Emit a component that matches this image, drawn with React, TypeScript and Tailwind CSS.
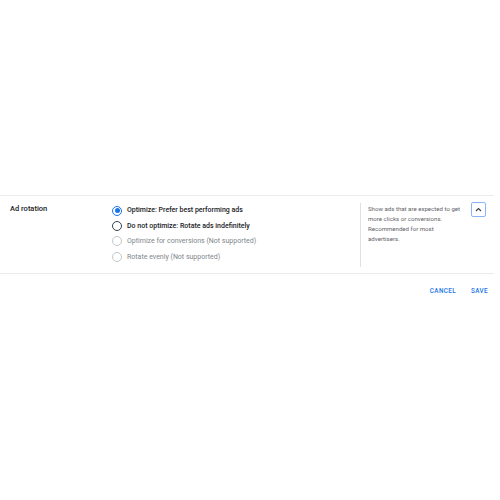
const options = [
  { label: "Optimize: Prefer best performing ads", checked: true, disabled: false },
  { label: "Do not optimize: Rotate ads indefinitely", checked: false, disabled: false },
  { label: "Optimize for conversions (Not supported)", checked: false, disabled: true },
  { label: "Rotate evenly (Not supported)", checked: false, disabled: true },
];

const Radio = ({ checked, disabled }: { checked: boolean; disabled: boolean }) => {
  if (checked) {
    return (
      <span className="w-[10px] h-[10px] rounded-full border-[1.5px] border-[#1a73e8] flex items-center justify-center">
        <span className="w-[5px] h-[5px] rounded-full bg-[#1a73e8]" />
      </span>
    );
  }
  return (
    <span
      className={
        disabled
          ? "w-[10px] h-[10px] rounded-full border border-[#c4c7c5]"
          : "w-[10px] h-[10px] rounded-full border-[1.5px] border-[#3c4043]"
      }
    />
  );
};

const App = () => {
  return (
    <div className="w-[500px] h-[500px] bg-white font-['Roboto',sans-serif]">
      <div className="h-[195px]" />
      <div className="w-[494px] border-t border-b border-[#ebebeb] flex h-[79px]">
        <div className="w-[112px] pl-[10px] pt-[8px] text-[7.5px] leading-[10px] font-medium text-[#202124]">
          Ad rotation
        </div>
        <div className="w-[248px] pt-[7px] flex flex-col">
          {options.map((o) => (
            <div key={o.label} className="h-[15.4px] flex items-center gap-[5px]">
              <Radio checked={o.checked} disabled={o.disabled} />
              <span
                className={
                  o.disabled
                    ? "text-[7px] text-[#80868b]"
                    : "text-[7px] font-medium text-[#202124]"
                }
              >
                {o.label}
              </span>
            </div>
          ))}
        </div>
        <div className="flex-1 flex pt-[7px] pb-[6px]">
          <div className="border-l border-[#e0e0e0] pl-[7px] w-[104px] text-[6.1px] leading-[10px] text-[#5f6368] pt-[1px]">
            Show ads that are expected to get more clicks or conversions. Recommended for most advertisers.
          </div>
          <div>
            <button className="mt-[-1px] ml-[7px] w-[15px] h-[15px] rounded-[2px] border-[1.5px] border-[#8ab4f8] flex items-center justify-center">
              <svg width="7" height="5" viewBox="0 0 7 5">
                <path d="M1 4 L3.5 1.5 L6 4" fill="none" stroke="#3c4043" strokeWidth="1.1" />
              </svg>
            </button>
          </div>
        </div>
      </div>
      <div className="w-[494px] flex justify-end gap-[15px] pt-[13px] pr-[6px] text-[6.3px] font-medium tracking-[0.4px] text-[#1a73e8]">
        <span>CANCEL</span>
        <span>SAVE</span>
      </div>
    </div>
  );
};

export default App;
